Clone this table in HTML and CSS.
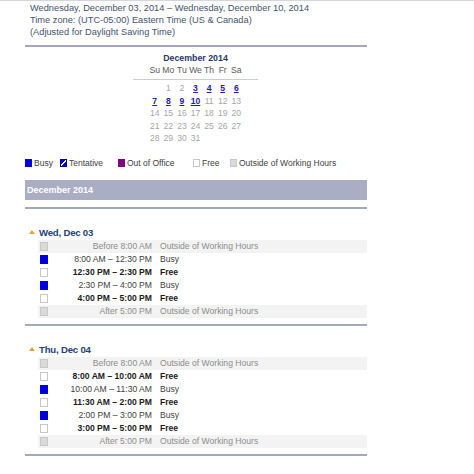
FILE: index.html
```html
<!DOCTYPE html>
<html>
<head>
<meta charset="utf-8">
<link rel="stylesheet" href="styles.css">
</head>
<body>
<div class="page">
  <div class="info">
    <div>Wednesday, December 03, 2014 – Wednesday, December 10, 2014</div>
    <div>Time zone: (UTC-05:00) Eastern Time (US &amp; Canada)</div>
    <div>(Adjusted for Daylight Saving Time)</div>
  </div>
  <div class="rule rule-top"></div>

  <div class="cal">
    <div class="cal-title">December 2014</div>
    <div class="cal-head">
      <span>Su</span><span>Mo</span><span>Tu</span><span>We</span><span>Th</span><span>Fr</span><span>Sa</span>
    </div>
    <div class="cal-grid">
      <span></span><span>1</span><span>2</span><a>3</a><a>4</a><a>5</a><a>6</a>
      <a>7</a><a>8</a><a>9</a><a>10</a><span>11</span><span>12</span><span>13</span>
      <span>14</span><span>15</span><span>16</span><span>17</span><span>18</span><span>19</span><span>20</span>
      <span>21</span><span>22</span><span>23</span><span>24</span><span>25</span><span>26</span><span>27</span>
      <span>28</span><span>29</span><span>30</span><span>31</span>
    </div>
  </div>

  <div class="legend">
    <span class="lg lg-busy"><i class="sw sw-busy"></i>Busy</span>
    <span class="lg lg-tent"><i class="sw sw-tent"></i>Tentative</span>
    <span class="lg lg-oof"><i class="sw sw-oof"></i>Out of Office</span>
    <span class="lg lg-free"><i class="sw sw-free"></i>Free</span>
    <span class="lg"><i class="sw sw-out"></i>Outside of Working Hours</span>
  </div>

  <div class="month-bar">December 2014</div>
  <div class="rule"></div>

  <section class="day">
    <div class="day-head"><span class="tri"></span>Wed, Dec 03</div>
    <div class="row out"><i class="sw sw-out"></i><span class="time">Before 8:00 AM</span><span class="st">Outside of Working Hours</span></div>
    <div class="row"><i class="sw sw-busy"></i><span class="time">8:00 AM – 12:30 PM</span><span class="st">Busy</span></div>
    <div class="row free"><i class="sw sw-free"></i><span class="time">12:30 PM – 2:30 PM</span><span class="st">Free</span></div>
    <div class="row"><i class="sw sw-busy"></i><span class="time">2:30 PM – 4:00 PM</span><span class="st">Busy</span></div>
    <div class="row free"><i class="sw sw-free"></i><span class="time">4:00 PM – 5:00 PM</span><span class="st">Free</span></div>
    <div class="row out"><i class="sw sw-out"></i><span class="time">After 5:00 PM</span><span class="st">Outside of Working Hours</span></div>
  </section>
  <div class="rule"></div>

  <section class="day">
    <div class="day-head"><span class="tri"></span>Thu, Dec 04</div>
    <div class="row out"><i class="sw sw-out"></i><span class="time">Before 8:00 AM</span><span class="st">Outside of Working Hours</span></div>
    <div class="row free"><i class="sw sw-free"></i><span class="time">8:00 AM – 10:00 AM</span><span class="st">Free</span></div>
    <div class="row"><i class="sw sw-busy"></i><span class="time">10:00 AM – 11:30 AM</span><span class="st">Busy</span></div>
    <div class="row free"><i class="sw sw-free"></i><span class="time">11:30 AM – 2:00 PM</span><span class="st">Free</span></div>
    <div class="row"><i class="sw sw-busy"></i><span class="time">2:00 PM – 3:00 PM</span><span class="st">Busy</span></div>
    <div class="row free"><i class="sw sw-free"></i><span class="time">3:00 PM – 5:00 PM</span><span class="st">Free</span></div>
    <div class="row out"><i class="sw sw-out"></i><span class="time">After 5:00 PM</span><span class="st">Outside of Working Hours</span></div>
  </section>
  <div class="rule"></div>
</div>
</body>
</html>
```
FILE: styles.css
```css
html, body {
  margin: 0;
  padding: 0;
  background: #ffffff;
}
body {
  font-family: "Liberation Sans", Arial, sans-serif;
  font-size: 9.6px;
  color: #404040;
  border-top: 1px solid #d3d6db;
  height: 473px;
  overflow: hidden;
}
.page {
  width: 342px;
  margin-left: 25px;
}
.info {
  padding-left: 5px;
  margin-top: 1px;
  color: #44546a;
  line-height: 12px;
  font-size: 9.25px;
}
.rule {
  height: 2px;
  background: #a3a9bd;
}
.rule-top {
  margin-top: 7px;
}
.cal {
  width: 125px;
  margin: 5px 0 0 108px;
  text-align: center;
}
.cal-title {
  color: #1f3864;
  font-weight: bold;
  font-size: 8.8px;
  line-height: 12px;
}
.cal-head {
  display: grid;
  grid-template-columns: repeat(7, 13.6px);
  justify-content: center;
  color: #595959;
  font-size: 8.6px;
  line-height: 12px;
  padding-bottom: 3px;
  border-bottom: 1px solid #c9ccd4;
}
.cal-grid {
  display: grid;
  grid-template-columns: repeat(7, 13.6px);
  justify-content: center;
  margin-top: 2px;
  font-size: 8.6px;
  line-height: 12.5px;
  color: #a6a6a6;
}
.cal-grid a {
  color: #1c1ca8;
  font-weight: bold;
  text-decoration: underline;
}
.legend {
  display: flex;
  align-items: center;
  margin-top: 12px;
  height: 12px;
  font-size: 8.5px;
  color: #404040;
}
.lg {
  display: flex;
  align-items: center;
  flex: none;
}
.lg .sw {
  margin-right: 2px;
}
.lg-busy { width: 35px; }
.lg-tent { width: 58px; }
.lg-oof { width: 75px; }
.lg-free { width: 37px; }
.sw {
  display: inline-block;
  width: 7px;
  height: 8px;
  box-sizing: border-box;
  flex: none;
}
.sw-busy { background: #0000e0; }
.sw-tent {
  background: linear-gradient(135deg, #0000e0 0 42%, #ffffff 42% 58%, #0000e0 58% 100%);
  border: 1px solid #0000a0;
}
.sw-oof { background: #800080; }
.sw-free { background: #ffffff; border: 1px solid #c6c6c6; }
.sw-out { background: #dadada; border: 1px solid #c8c8c8; }

.month-bar {
  margin-top: 11px;
  height: 20px;
  line-height: 20px;
  background: #a9aec5;
  color: #ffffff;
  font-weight: bold;
  font-size: 9px;
  padding-left: 2px;
  margin-bottom: 7px;
}
.day {
  padding-top: 16px;
  padding-bottom: 6px;
}
.day-head {
  display: flex;
  align-items: center;
  height: 15px;
  color: #21407a;
  font-weight: bold;
  font-size: 9.6px;
  letter-spacing: -0.2px;
  padding-left: 4px;
}
.tri {
  width: 0;
  height: 0;
  border-left: 3.5px solid transparent;
  border-right: 3.5px solid transparent;
  border-bottom: 4px solid #e3a33c;
  margin-right: 4px;
}
.row {
  display: flex;
  align-items: center;
  height: 13px;
  margin-left: 13px;
  padding-left: 2px;
  font-size: 8.6px;
  color: #404040;
}
.row .sw {
  width: 8px;
  height: 9px;
}
.row .time {
  width: 104px;
  text-align: right;
}
.row .st {
  margin-left: 8px;
}
.row.out {
  background: #f3f3f3;
  color: #8c8c8c;
}
.row.free {
  font-weight: bold;
  color: #1a1a1a;
}
```
